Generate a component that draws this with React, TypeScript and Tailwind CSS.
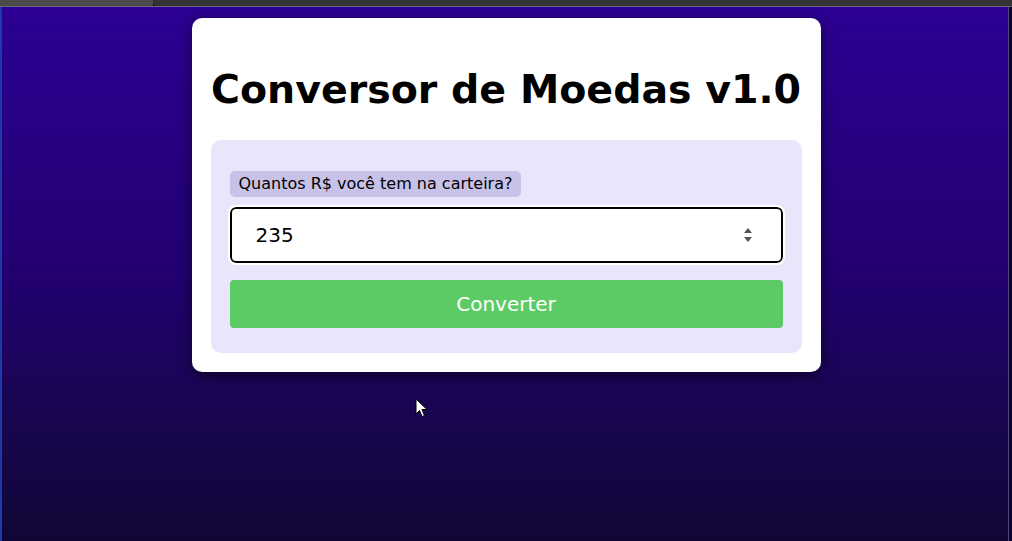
import React, { useState } from 'react';

const font = { fontFamily: '"DejaVu Sans", Verdana, sans-serif' };

export default function App() {
  const [valor, setValor] = useState('235');

  return (
    <div className="relative flex h-screen w-full flex-col overflow-hidden bg-[#120636]" style={font}>
      {/* Window top strip */}
      <div className="flex h-[7px] border-b border-[#6d6b82]">
        <div className="w-[153px] bg-[#4b4b4b]" />
        <div className="flex-1 rounded-bl-[4px] bg-[#333333]" />
      </div>

      <div className="flex flex-1">
        <div className="w-[2px] bg-[#1d3aa6]" />

        {/* Page */}
        <main className="flex flex-1 justify-center bg-gradient-to-b from-[#2b0093] via-[#220070] to-[#110636] pl-[2px] pt-[11px]">
          <div className="flex h-[354px] w-[629px] flex-col rounded-[10px] bg-white px-[19px] pt-[20px] shadow-[0_4px_14px_rgba(0,0,0,0.55)]">
            <h1 className="mt-[28px] text-center text-[39.5px] font-bold leading-[47px] text-black">
              Conversor de Moedas v1.0
            </h1>

            <div className="mt-[27px] flex flex-col rounded-[10px] bg-[#e8e6fa] px-[19px] pb-[25px] pt-[31px]">
              <div className="flex">
                <label className="rounded-[5px] bg-[#c8c1e8] px-[9px] text-[16px] leading-[26px] text-black">
                  Quantos R$ você tem na carteira?
                </label>
              </div>

              <div className="mt-[10px] flex h-[56px] items-center rounded-[6px] border-2 border-black bg-white pl-[24px] pr-[28px] outline outline-2 outline-white">
                <input
                  type="text"
                  value={valor}
                  onChange={(e) => setValor(e.target.value)}
                  className="min-w-0 flex-1 bg-transparent text-[20px] text-black outline-none"
                  style={font}
                />
                {/* spinner */}
                <svg width="10" height="18" viewBox="0 0 10 18" className="text-[#555]">
                  <path d="M5 2 L9 7 L1 7 Z" fill="currentColor" />
                  <path d="M1 11 L9 11 L5 16 Z" fill="currentColor" />
                </svg>
              </div>

              <button className="mt-[17px] h-[48px] w-full rounded-[4px] bg-[#5ccb65] text-[20px] text-white" style={font}>
                Converter
              </button>
            </div>
          </div>
        </main>

        <div className="w-[1px] bg-[#4c4782]" />
        <div className="w-[3px] bg-[#0e0626]" />
      </div>

      {/* mouse cursor */}
      <svg className="absolute left-[415px] top-[398px]" width="14" height="21" viewBox="0 0 14 21">
        <path d="M1 1 L1 16 L4.5 12.5 L7 18.5 L9.5 17.5 L7 11.5 L12 11.5 Z" fill="white" stroke="black" strokeWidth="1" />
      </svg>
    </div>
  );
}
